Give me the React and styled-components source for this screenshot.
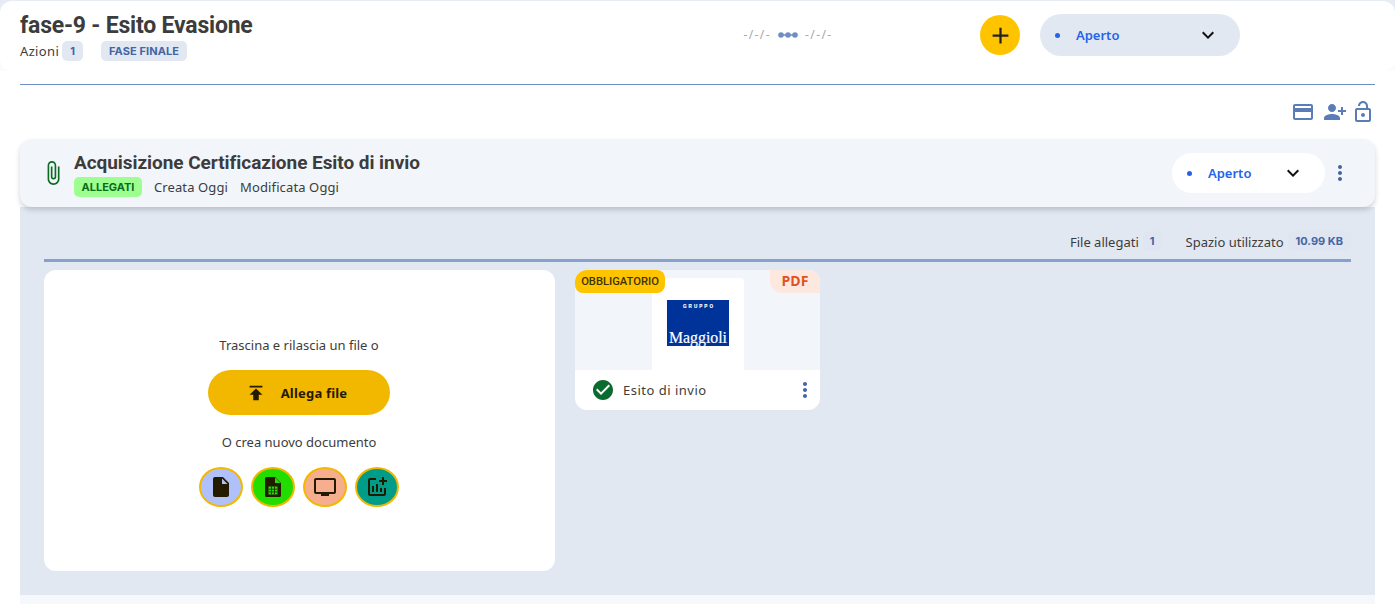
import React from 'react'
import styled, { createGlobalStyle } from 'styled-components'
import {
  MdAdd,
  MdKeyboardArrowDown,
  MdOutlineCreditCard,
  MdPersonAdd,
  MdOutlineLockOpen,
  MdAttachFile,
  MdMoreVert,
  MdPublish,
  MdInsertDriveFile,
  MdOutlineTv,
  MdOutlineAddchart,
  MdCheckCircle,
} from 'react-icons/md'

const Global = createGlobalStyle`
  * { box-sizing: border-box; }
  html, body { margin: 0; padding: 0; background: #fff; }
  body { font-family: 'Noto Sans', 'Liberation Sans', sans-serif; color: #3c3c3c; overflow: hidden; }
`

const Page = styled.div`
  width: 1395px;
  height: 604px;
  overflow: hidden;
  background: #ffffff;
  display: flex;
  flex-direction: column;
`
const HeaderZone = styled.div`
  position: relative;
  padding-top: 1px;
  background: linear-gradient(#e6ebf4 0, #fbfcfe 71px, #fff 71px);
  &::before {
    content: '';
    position: absolute;
    top: 1px;
    left: 0;
    right: 0;
    height: 70px;
    background: #fff;
    border-radius: 12px;
  }
`
const Header = styled.header`
  position: relative;
  height: 84px;
  margin: 0 20px;
  border-bottom: 1px solid #6f8fc4;
  display: flex;
  align-items: flex-start;
`
const TitleBlock = styled.div`
  width: 640px;
  padding-top: 10px;
`
const Title = styled.h1`
  margin: 0;
  font: 700 23px/30px Roboto, sans-serif;
  color: #3c3c3c;
  letter-spacing: -0.2px;
`
const SubRow = styled.div`
  display: flex;
  align-items: center;
  font-size: 13px;
  letter-spacing: 0.35px;
`
const Chip = styled.span`
  display: inline-flex;
  align-items: center;
  justify-content: center;
  height: 20px;
  padding: 0 8px;
  border-radius: 5px;
  background: #e2e8f2;
  color: #4465a3;
  font: 700 11px Inter, sans-serif;
  letter-spacing: 0.1px;
  margin-left: ${p => p.$gap || 0}px;
`
const Dates = styled.div`
  width: 256px;
  padding-top: 26px;
  display: flex;
  justify-content: center;
  align-items: center;
  gap: 7px;
  color: #a8a8a8;
  font-size: 12px;
  line-height: 16px;
  letter-spacing: 1.4px;
`
const AddButton = styled.button`
  width: 40px;
  height: 40px;
  margin: 14px 20px 0 64px;
  border: 0;
  padding: 0;
  border-radius: 50%;
  background: #ffc400;
  color: #222;
  display: flex;
  align-items: center;
  justify-content: center;
  font-size: 27px;
`
const StatusSelect = styled.div`
  width: ${p => p.$width}px;
  height: ${p => p.$height}px;
  margin-top: ${p => p.$top || 0}px;
  margin-right: ${p => p.$after || 0}px;
  border-radius: 22px;
  background: ${p => p.$bg};
  display: flex;
  align-items: center;
  padding: 0 20px 0 15px;
  color: #2563eb;
  font: 600 13px 'Noto Sans', sans-serif;
  svg { margin-left: auto; color: #111; font-size: 24px; }
`
const Dot = styled.span`
  width: 5px;
  height: 5px;
  border-radius: 50%;
  background: #2563eb;
  margin-right: 16px;
`
const Toolbar = styled.div`
  height: 54px;
  padding: 15px 20px 0 0;
  display: flex;
  justify-content: flex-end;
  gap: 4px;
  color: #5a7db8;
  font-size: 24px;
`
const PersonIcon = styled(MdPersonAdd)`
  margin-left: 4px;
  transform: scaleX(-1);
`
const Section = styled.section`
  margin: 0 20px;
  flex: 1;
  display: flex;
  flex-direction: column;
`
const SectionHead = styled.div`
  position: relative;
  z-index: 1;
  height: 68px;
  background: #f2f5fa;
  border-radius: 12px;
  box-shadow: 0 3px 5px rgba(60, 70, 90, 0.24);
  display: flex;
  align-items: center;
  padding: 0 23px 0 20px;
`
const ClipIcon = styled(MdAttachFile)`
  font-size: 26px;
  color: #0a6b1e;
  margin-right: 8px;
  flex: none;
`
const HeadText = styled.div`
  flex: 1;
  padding-top: 2px;
`
const SectionTitle = styled.h2`
  margin: 0;
  font: 700 19px/24px Roboto, sans-serif;
  letter-spacing: -0.05px;
  color: #3c3c3c;
`
const HeadMeta = styled.div`
  display: flex;
  align-items: center;
  gap: 12px;
  font-size: 13px;
  margin-top: 2px;
  letter-spacing: 0.12px;
`
const GreenChip = styled.span`
  height: 20px;
  padding: 0 7.5px;
  border-radius: 5px;
  background: #9cff8f;
  color: #0a6b1e;
  font: 700 11px/20px Inter, sans-serif;
  letter-spacing: 0;
`
const Kebab = styled(MdMoreVert)`
  font-size: 24px;
  color: #4465a3;
  flex: none;
`
const SectionBody = styled.div`
  flex: 1;
  padding: 0 24px;
  background: #e2e8f2;
`
const StatsRow = styled.div`
  height: 55px;
  padding-top: 24px;
  border-bottom: 3px solid #87a0cc;
  display: flex;
  justify-content: flex-end;
  align-items: flex-start;
  font-size: 13px;
  line-height: 22px;
`
const StatChip = styled.span`
  height: 20px;
  padding: 0 ${p => p.$pad || 8}px;
  margin: 0 ${p => p.$after || 0}px 0 4px;
  border-radius: 5px;
  background: #e0e6f1;
  color: #4465a3;
  font: 700 11px/20px Inter, sans-serif;
`
const Columns = styled.div`
  display: flex;
  gap: 20px;
  padding-top: 8px;
  align-items: flex-start;
`
const DropPanel = styled.div`
  width: 511px;
  height: 301px;
  background: #fff;
  border-radius: 12px;
  display: flex;
  flex-direction: column;
  align-items: center;
  padding: 66px 1px 0 0;
  font-size: 13px;
  line-height: 18px;
`
const AttachButton = styled.button`
  width: 182px;
  height: 45px;
  margin: 16px 0 18px;
  border: 0;
  padding: 0 6px 0 0;
  border-radius: 23px;
  background: #f2b800;
  color: #231a00;
  display: flex;
  align-items: center;
  justify-content: center;
  gap: 14px;
  font: 700 13px 'Noto Sans', sans-serif;
  letter-spacing: 0.2px;
  svg { font-size: 22px; }
`
const DocTypes = styled.div`
  display: flex;
  gap: 8px;
  margin-top: 16px;
`
const DocType = styled.div`
  width: 44px;
  height: 40px;
  border-radius: 50%;
  border: 2px solid #f2b800;
  background: ${p => p.$bg};
  color: #231a00;
  display: flex;
  align-items: center;
  justify-content: center;
  font-size: 24px;
`
const DocCard = styled.article`
  position: relative;
  width: 245px;
  height: 140px;
  background: #fff;
  border-radius: 12px;
  overflow: hidden;
`
const Preview = styled.div`
  height: 100px;
  background: #f2f5fa;
  display: flex;
  justify-content: center;
  align-items: flex-end;
`
const PreviewSheet = styled.div`
  width: 92px;
  height: 92px;
  background: #fff;
  border-radius: 4px 4px 0 0;
  padding: 22px 15px 0;
  svg { display: block; overflow: visible; }
`
const RequiredBadge = styled.span`
  position: absolute;
  top: 0;
  left: 0;
  width: 90px;
  height: 23px;
  background: #ffc400;
  border-radius: 8px;
  color: #3c3200;
  font: 500 11.2px/23px Roboto, sans-serif;
  text-align: center;
`
const TypeBadge = styled.span`
  position: absolute;
  top: 0;
  right: 0;
  width: 50px;
  height: 23px;
  background: #fde8e0;
  border-bottom-left-radius: 12px;
  color: #e0531f;
  font: 700 14px/22px 'Open Sans', sans-serif;
  text-align: center;
`
const DocFooter = styled.div`
  height: 40px;
  display: flex;
  align-items: center;
  padding: 0 3px 0 16px;
  font-size: 13px;
  letter-spacing: 0.5px;
`
const CheckIcon = styled(MdCheckCircle)`
  font-size: 24px;
  color: #0a6b2e;
  margin-right: 8px;
`
const DocName = styled.span`
  flex: 1;
`
const BottomStrip = styled.div`
  height: 9px;
  background: #f6f8fc;
  margin: 0 20px;
`

const DateLink = () => (
  <svg width="20" height="8" viewBox="0 0 20 8">
    <path d="M2 4h16" stroke="#6f8fc4" strokeWidth="1.5" />
    <circle cx="3" cy="4" r="2.8" fill="#6f8fc4" />
    <circle cx="10" cy="4" r="2.8" fill="#6f8fc4" />
    <circle cx="17" cy="4" r="2.8" fill="#6f8fc4" />
  </svg>
)

const SheetIcon = () => (
  <svg width="24" height="24" viewBox="0 0 24 24" fill="#231a00">
    <path d="M5.5 2H14l6 6v12.5a1.5 1.5 0 0 1-1.5 1.5h-13A1.5 1.5 0 0 1 4 20.5v-17A1.5 1.5 0 0 1 5.5 2z" />
    <path d="M14 2.5l5.5 5.5H14z" fill="#22dd00" />
    <path d="M7.5 11.5h9v8h-9z" fill="#22dd00" />
    <path d="M10.5 11.5v8M13.5 11.5v8M7.5 14.2h9M7.5 16.9h9" stroke="#231a00" strokeWidth="0.8" />
  </svg>
)

const MaggioliLogo = () => (
  <svg width="62" height="46" viewBox="0 0 62 46">
    <rect width="62" height="46" fill="#00339a" />
    <text x="16" y="8" fontFamily="Liberation Sans" fontSize="4.6" fontWeight="700" fill="#fff" stroke="#fff" strokeWidth="0.15" textLength="30">GRUPPO</text>
    <text x="2" y="43" fontFamily="Liberation Serif" fontSize="16.5" fill="#fff" stroke="#fff" strokeWidth="0.2" textLength="58" lengthAdjust="spacingAndGlyphs">Maggioli</text>
  </svg>
)

export default function App() {
  return (
    <Page>
      <Global />
      <HeaderZone>
        <Header>
          <TitleBlock>
            <Title>fase-9 - Esito Evasione</Title>
            <SubRow>
              Azioni <Chip $gap={3}>1</Chip>
              <Chip $gap={18}>FASE FINALE</Chip>
            </SubRow>
          </TitleBlock>
          <Dates>
            <span>-/-/-</span> <DateLink /> <span>-/-/-</span>
          </Dates>
          <AddButton><MdAdd /></AddButton>
          <StatusSelect $width={200} $height={42} $top={13} $bg="#e2e8f2">
            <Dot />Aperto<MdKeyboardArrowDown />
          </StatusSelect>
        </Header>
      </HeaderZone>
      <Toolbar>
        <MdOutlineCreditCard />
        <PersonIcon />
        <MdOutlineLockOpen />
      </Toolbar>
      <Section>
        <SectionHead>
          <ClipIcon />
          <HeadText>
            <SectionTitle>Acquisizione Certificazione Esito di invio</SectionTitle>
            <HeadMeta>
              <GreenChip>ALLEGATI</GreenChip>
              <span>Creata Oggi</span>
              <span>Modificata Oggi</span>
            </HeadMeta>
          </HeadText>
          <StatusSelect $width={153} $height={40} $after={3} $bg="#ffffff">
            <Dot />Aperto<MdKeyboardArrowDown />
          </StatusSelect>
          <Kebab />
        </SectionHead>
        <SectionBody>
          <StatsRow>
            File allegati <StatChip $pad={7} $after={24}>1</StatChip>
            Spazio utilizzato <StatChip>10.99 KB</StatChip>
          </StatsRow>
          <Columns>
            <DropPanel>
              <div>Trascina e rilascia un file o</div>
              <AttachButton><MdPublish />Allega file</AttachButton>
              <div>O crea nuovo documento</div>
              <DocTypes>
                <DocType $bg="#b0c0fb"><MdInsertDriveFile /></DocType>
                <DocType $bg="#22dd00"><SheetIcon /></DocType>
                <DocType $bg="#f6ae8e"><MdOutlineTv /></DocType>
                <DocType $bg="#009c8a"><MdOutlineAddchart /></DocType>
              </DocTypes>
            </DropPanel>
            <DocCard>
              <Preview>
                <PreviewSheet><MaggioliLogo /></PreviewSheet>
              </Preview>
              <RequiredBadge>OBBLIGATORIO</RequiredBadge>
              <TypeBadge>PDF</TypeBadge>
              <DocFooter>
                <CheckIcon />
                <DocName>Esito di invio</DocName>
                <Kebab />
              </DocFooter>
            </DocCard>
          </Columns>
        </SectionBody>
      </Section>
      <BottomStrip />
    </Page>
  )
}
